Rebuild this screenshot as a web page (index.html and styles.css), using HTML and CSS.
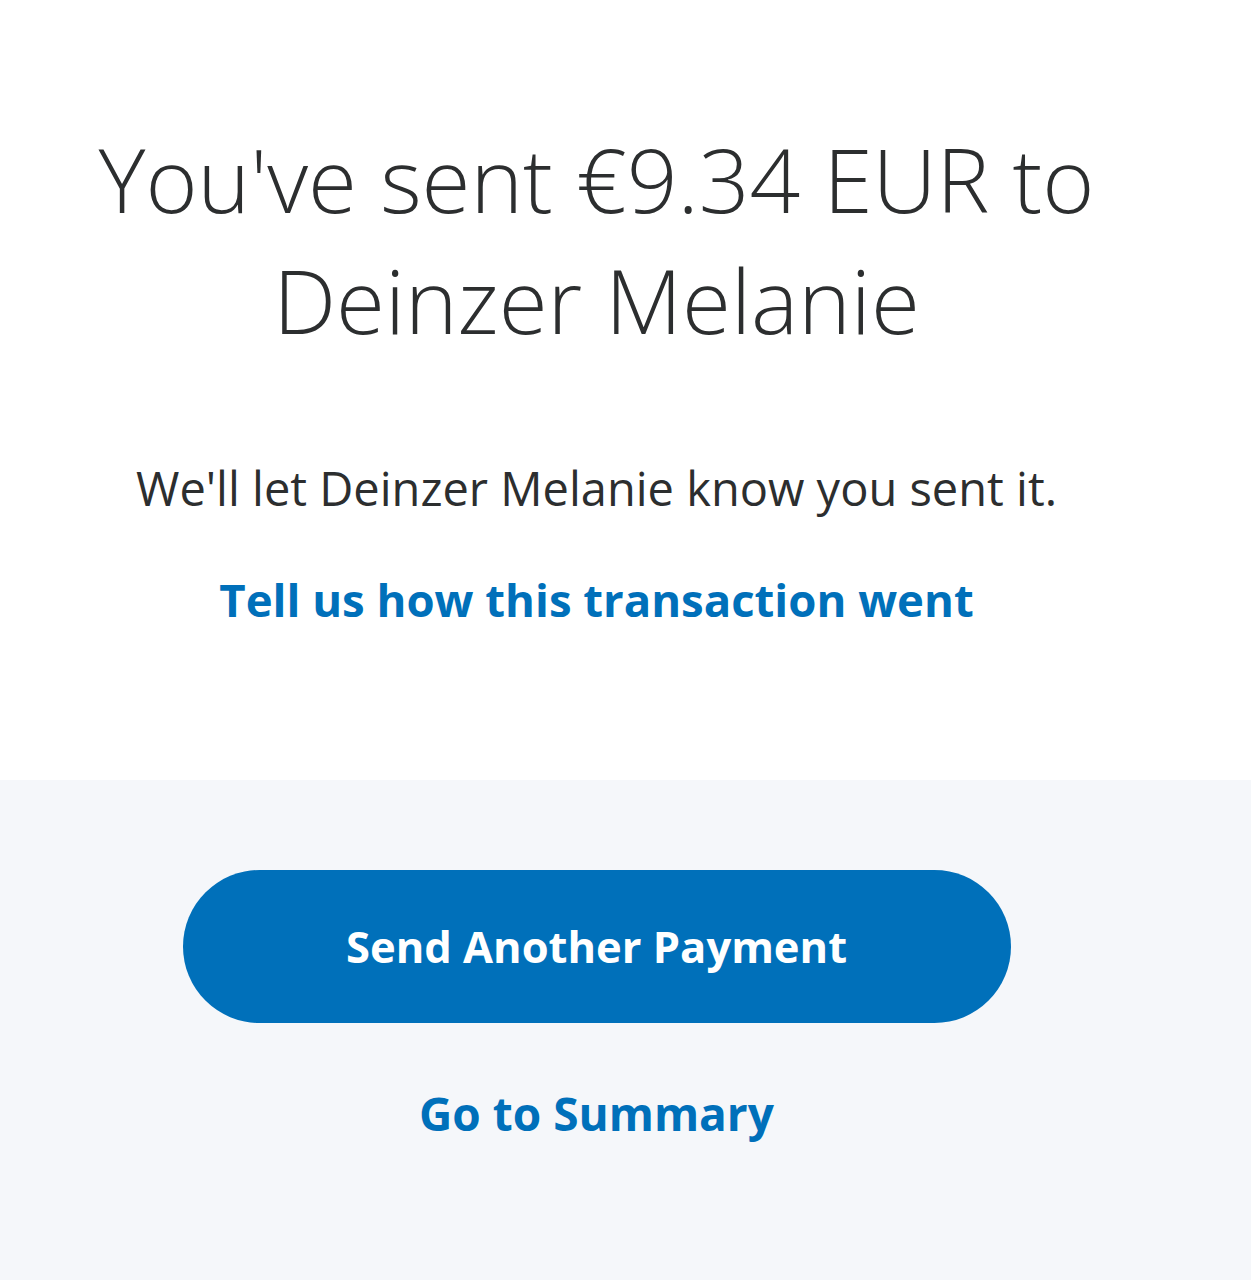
FILE: index.html
```html
<!DOCTYPE html>
<html lang="en">
<head>
<meta charset="utf-8">
<title>Payment sent</title>
<link rel="stylesheet" href="styles.css">
</head>
<body>
<main class="page">
  <section class="top">
    <h1 class="title">You've sent €9.34 EUR to<br>Deinzer Melanie</h1>
    <p class="note">We'll let Deinzer Melanie know you sent it.</p>
    <a class="feedback" href="#">Tell us how this transaction went</a>
  </section>
  <section class="bottom">
    <button class="primary" type="button">Send Another Payment</button>
    <a class="summary" href="#">Go to Summary</a>
  </section>
</main>
</body>
</html>
```

FILE: styles.css
```css
* { box-sizing: border-box; }
html, body { margin: 0; padding: 0; }
body {
  background: #f5f7fa;
  font-family: "Open Sans", "Noto Sans", sans-serif;
  color: #2c2e2f;
}
.page {
  display: flex;
  flex-direction: column;
  min-height: 1280px;
}
.top {
  background: #ffffff;
  height: 780px;
  display: flex;
  flex-direction: column;
  align-items: center;
  padding: 118px 58px 0 0;
}
.title {
  margin: 0;
  font-weight: 300;
  font-size: 89px;
  line-height: 121px;
  text-align: center;
  color: #2c2e2f;
}
.note {
  margin: 98px 0 0;
  font-size: 47px;
  line-height: 60px;
  text-align: center;
}
.feedback {
  margin-top: 51px;
  font-size: 45.5px;
  line-height: 60px;
  font-weight: 700;
  color: #0070ba;
  text-decoration: none;
}
.bottom {
  flex: 1;
  background: #f5f7fa;
  display: flex;
  flex-direction: column;
  align-items: center;
  padding: 90px 58px 0 0;
}
.primary {
  width: 828px;
  height: 153px;
  border: 0;
  border-radius: 77px;
  background: #0070ba;
  color: #ffffff;
  font-family: inherit;
  font-size: 43.5px;
  font-weight: 700;
  cursor: pointer;
}
.summary {
  margin-top: 58px;
  font-size: 46px;
  line-height: 64px;
  font-weight: 700;
  color: #0070ba;
  text-decoration: none;
}
```
